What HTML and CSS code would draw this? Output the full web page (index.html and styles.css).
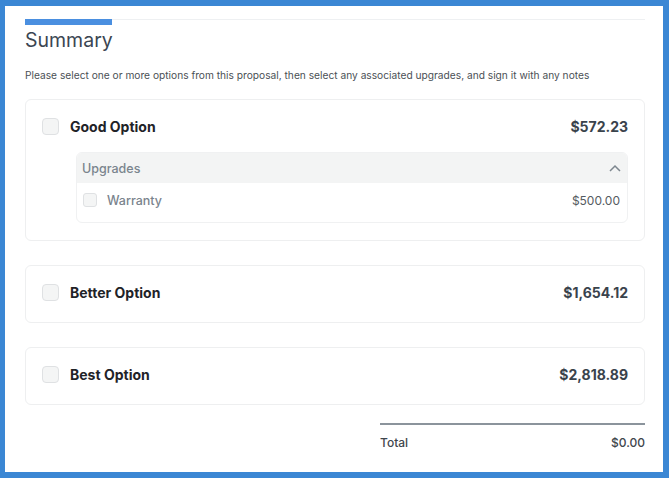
FILE: index.html
```html
<!DOCTYPE html>
<html>
	<head>
		<meta charset="UTF-8">
		<title>Summary</title>
		<link rel="stylesheet" href="styles.css">
	</head>
	<body>
		<div class="frame">
			<div class="tabs">
				<div class="tab-active"></div>
			</div>
			<h1 class="title">Summary</h1>
			<p class="intro">Please select one or more options from this proposal, then select any associated upgrades, and sign it with any notes</p>

			<div class="option">
				<div class="option-head">
					<span class="check"></span>
					<span class="option-name">Good Option</span>
					<span class="option-price">$572.23</span>
				</div>
				<div class="upgrades">
					<div class="upgrades-head">
						<span>Upgrades</span>
						<svg class="chevron" width="12" height="8" viewBox="0 0 12 8">
							<path d="M1 7 L6 2 L11 7" fill="none" stroke="#7d868e" stroke-width="1.5"/>
						</svg>
					</div>
					<div class="upgrade-row">
						<span class="check small"></span>
						<span class="upgrade-name">Warranty</span>
						<span class="upgrade-price">$500.00</span>
					</div>
				</div>
			</div>

			<div class="option">
				<div class="option-head">
					<span class="check"></span>
					<span class="option-name">Better Option</span>
					<span class="option-price">$1,654.12</span>
				</div>
			</div>

			<div class="option">
				<div class="option-head">
					<span class="check"></span>
					<span class="option-name">Best Option</span>
					<span class="option-price">$2,818.89</span>
				</div>
			</div>

			<div class="total">
				<span>Total</span>
				<span>$0.00</span>
			</div>
		</div>
	</body>
</html>
```
FILE: styles.css
```css
html, body{
	margin: 0;
	height: 100%;
}
body{
	background-color: #3b87d4;
	padding: 6px 6px 6px 5px;
	box-sizing: border-box;
	font-family: "Inter", "Noto Sans", sans-serif;
}
.frame{
	background-color: #fff;
	height: 100%;
	box-sizing: border-box;
	padding: 13px 18px 0 20px;
	overflow: hidden;
}
.tabs{
	border-top: 1px solid #eef0f2;
	height: 6px;
}
.tab-active{
	width: 87px;
	height: 6px;
	margin-top: -1px;
	background-color: #4a8fe0;
}
.title{
	margin: 2px 0 0 0;
	font-size: 19.5px;
	line-height: 24px;
	font-weight: 400;
	color: #3b4652;
}
.intro{
	margin: 16px 0 0 0;
	font-size: 10.2px;
	line-height: 14px;
	color: #4a4f55;
}
.option{
	border: 1px solid #eeeff0;
	border-radius: 6px;
	margin-top: 24px;
	padding: 0 16px 3px 16px;
}
.intro + .option{
	margin-top: 17px;
}
.option-head{
	display: flex;
	align-items: center;
	height: 53px;
}
.check{
	width: 15px;
	height: 15px;
	border: 1px solid #dfe1e3;
	border-radius: 4px;
	background-color: #f4f5f5;
	flex-shrink: 0;
}
.check.small{
	width: 12px;
	height: 12px;
	border-radius: 3px;
}
.option-name{
	margin-left: 11px;
	font-size: 14px;
	font-weight: 700;
	color: #1f2328;
}
.option-price{
	margin-left: auto;
	font-size: 14px;
	font-weight: 700;
	color: #3a434c;
}
.upgrades{
	margin: -1px 0 14px 34px;
	border: 1px solid #f0f1f2;
	border-radius: 6px;
	overflow: hidden;
}
.upgrades-head{
	display: flex;
	align-items: center;
	justify-content: space-between;
	height: 30px;
	padding: 0 5px 0 5px;
	background-color: #f3f4f4;
	font-size: 12.5px;
	font-weight: 500;
	color: #7a848d;
}
.chevron{
	margin-right: 1px;
}
.upgrade-row{
	display: flex;
	align-items: center;
	height: 34px;
	padding: 0 7px 5px 6px;
}
.upgrade-name{
	margin-left: 10px;
	font-size: 12.5px;
	font-weight: 500;
	color: #7a848d;
}
.upgrade-price{
	margin-left: auto;
	font-size: 12px;
	color: #555b61;
}
.total{
	margin: 18px 0 0 355px;
	border-top: 2px solid #8b949c;
	display: flex;
	justify-content: space-between;
	padding-top: 10px;
	font-size: 12px;
	font-weight: 500;
	color: #3f464d;
}
```
